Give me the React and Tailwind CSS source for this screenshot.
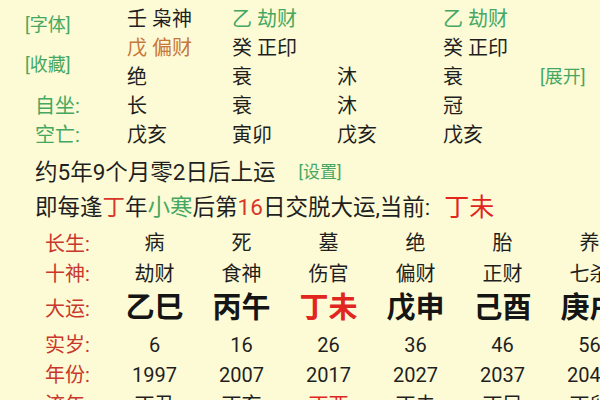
const green = "text-[#45a862]";
const redLabel = "text-[#c9372c]";

const topRows = [
  [
    { t: "壬 枭神", c: "text-[#1f1f1f]" },
    { t: "乙 劫财", c: green },
    { t: "", c: "" },
    { t: "乙 劫财", c: green },
  ],
  [
    { t: "戊 偏财", c: "text-[#c8773a]" },
    { t: "癸 正印", c: "text-[#1f1f1f]" },
    { t: "", c: "" },
    { t: "癸 正印", c: "text-[#1f1f1f]" },
  ],
  [
    { t: "绝", c: "text-[#1f1f1f]" },
    { t: "衰", c: "text-[#1f1f1f]" },
    { t: "沐", c: "text-[#1f1f1f]" },
    { t: "衰", c: "text-[#1f1f1f]" },
  ],
  [
    { t: "长", c: "text-[#1f1f1f]" },
    { t: "衰", c: "text-[#1f1f1f]" },
    { t: "沐", c: "text-[#1f1f1f]" },
    { t: "冠", c: "text-[#1f1f1f]" },
  ],
  [
    { t: "戊亥", c: "text-[#1f1f1f]" },
    { t: "寅卯", c: "text-[#1f1f1f]" },
    { t: "戊亥", c: "text-[#1f1f1f]" },
    { t: "戊亥", c: "text-[#1f1f1f]" },
  ],
];

const dayun = [
  { cs: "病", ss: "劫财", gz: "乙巳", age: "6", year: "1997", ln: "丁丑" },
  { cs: "死", ss: "食神", gz: "丙午", age: "16", year: "2007", ln: "丁亥" },
  { cs: "墓", ss: "伤官", gz: "丁未", age: "26", year: "2017", ln: "丁酉", cur: true },
  { cs: "绝", ss: "偏财", gz: "戊申", age: "36", year: "2027", ln: "丁未" },
  { cs: "胎", ss: "正财", gz: "己酉", age: "46", year: "2037", ln: "丁巳" },
  { cs: "养", ss: "七杀", gz: "庚戌", age: "56", year: "2047", ln: "丁卯" },
];

function Label({ children }) {
  return <div className={`pl-[45px] flex items-center ${redLabel}`}>{children}</div>;
}

export default function App() {
  return (
    <div
      className="w-[600px] h-[400px] overflow-hidden bg-[#fdfbd5] text-[#1f1f1f]"
      style={{ fontFamily: "Roboto, 'Noto Sans CJK SC', sans-serif" }}
    >
      {/* top pillars */}
      <div className="pt-[4px] flex text-[20px]">
        <div className="w-[127px] shrink-0 flex flex-col">
          <div className="h-[87px] pl-[25px] pt-[10px] flex flex-col gap-[18px] text-[18px] leading-[22px]">
            <span className={green}>[字体]</span>
            <span className={green}>[收藏]</span>
          </div>
          <div className={`h-[29px] pl-[35px] flex items-center ${green}`}>自坐:</div>
          <div className={`h-[29px] pl-[35px] flex items-center ${green}`}>空亡:</div>
        </div>
        <div className="grid grid-cols-[105px_105px_106px_97px] shrink-0">
          {topRows.map((row, i) =>
            row.map((cell, j) => (
              <div key={`${i}-${j}`} className={`h-[29px] flex items-center whitespace-pre ${cell.c}`}>
                {cell.t}
              </div>
            ))
          )}
        </div>
        <div className="flex flex-col">
          <div className="h-[58px]" />
          <div className={`h-[29px] flex items-center text-[18px] ${green}`}>[展开]</div>
        </div>
      </div>

      {/* qiyun */}
      <div className="pl-[35px] h-[35px] mt-[6px] flex items-center text-[22.5px] whitespace-nowrap">
        <span>约5年9个月零2日后上运</span>
        <span className={`ml-[23px] text-[17px] ${green}`}>[设置]</span>
      </div>
      <div className="pl-[35px] h-[35px] flex items-center text-[22.5px] whitespace-nowrap">
        <span>即每逢</span>
        <span className="text-[#d9362b]">丁</span>
        <span>年</span>
        <span className={green}>小寒</span>
        <span>后第</span>
        <span className="text-[#d9362b]">16</span>
        <span>日交脱大运,当前:</span>
        <span className="ml-[14px] text-[25px] text-[#e0261e]">丁未</span>
      </div>

      {/* dayun table */}
      <div className="mt-[4px] grid grid-cols-[111px_repeat(6,87px)] text-[20px]">
        <Label>长生:</Label>
        {dayun.map((d, i) => (
          <div key={`cs${i}`} className="h-[28px] flex items-center justify-center">{d.cs}</div>
        ))}
        <Label>十神:</Label>
        {dayun.map((d, i) => (
          <div key={`ss${i}`} className="h-[29px] flex items-center justify-center">{d.ss}</div>
        ))}
        <Label>大运:</Label>
        {dayun.map((d, i) => (
          <div
            key={`gz${i}`}
            className={`h-[40px] flex items-center justify-center text-[29px] font-bold whitespace-nowrap ${d.cur ? "text-[#e0261e]" : "text-[#151515]"}`}
          >
            {d.gz}
          </div>
        ))}
        <Label>实岁:</Label>
        {dayun.map((d, i) => (
          <div key={`age${i}`} className="h-[31px] flex items-center justify-center text-[20px]">{d.age}</div>
        ))}
        <Label>年份:</Label>
        {dayun.map((d, i) => (
          <div key={`yr${i}`} className="h-[29px] flex items-center justify-center text-[20px]">{d.year}</div>
        ))}
        <Label>流年:</Label>
        {dayun.map((d, i) => (
          <div
            key={`ln${i}`}
            className={`h-[29px] flex items-center justify-center ${d.cur ? "text-[#e0261e]" : ""}`}
          >
            {d.ln}
          </div>
        ))}
      </div>
    </div>
  );
}
